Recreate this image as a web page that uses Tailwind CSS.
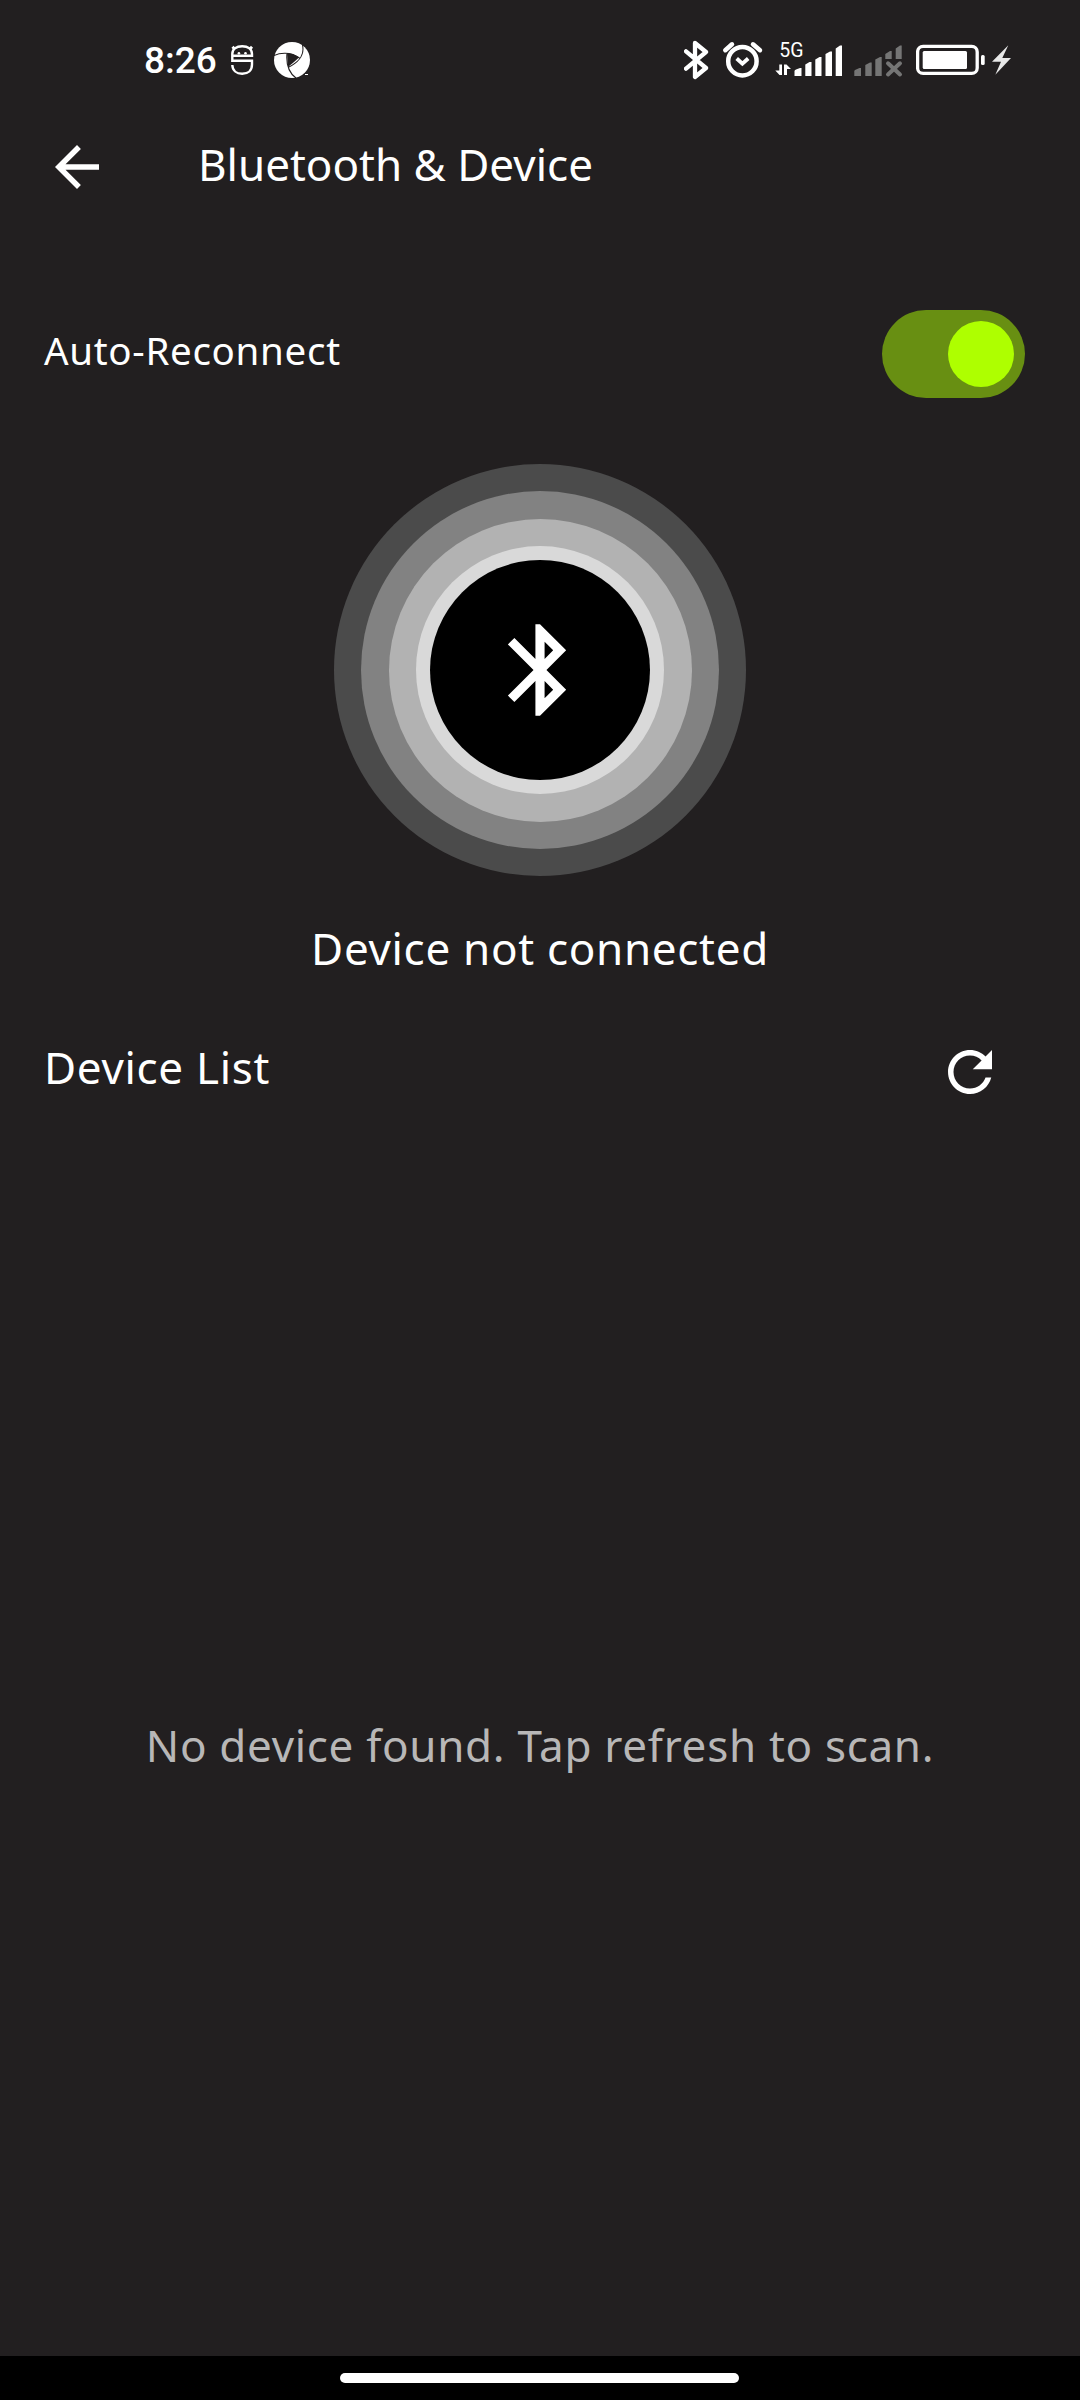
<!DOCTYPE html>
<html lang="en">
<head>
<meta charset="utf-8">
<title>Bluetooth &amp; Device</title>
<script src="https://cdn.jsdelivr.net/npm/@tailwindcss/browser@4"></script>
</head>
<body class="bg-[#221f20]">
<div class="flex h-[2400px] w-[1080px] flex-col overflow-hidden bg-[#221f20] font-['Noto_Sans',sans-serif] text-white">

  <!-- status bar -->
  <header class="flex h-[120px] items-start justify-between pt-9 pr-[68px] pl-[144px]">
    <div class="flex h-12 items-center">
      <span class="w-[86px] pt-0.5 font-['Roboto',sans-serif] text-[37px] leading-12 font-medium">8:26</span>
      <svg class="h-12 w-6" viewBox="230 36 24 48" fill="none" stroke="#fff" stroke-width="2.400">
        <path d="M252 55.700H232.300V54C232.300 49 236.500 46.300 242.200 46.300S252 49 252 54ZM232.300 55.700V60.800H252V64.500C252 70.500 248 73.800 242.200 73.800C236.500 73.800 232.500 70.500 232.300 65"/>
        <path d="M234.500 49L232.500 46.800M250 49L252 46.800" stroke-width="2.800"/>
        <circle cx="238.900" cy="53.300" r="1.300" fill="#fff" stroke="none"/><circle cx="245.500" cy="53.300" r="1.300" fill="#fff" stroke="none"/>
      </svg>
      <svg class="ml-5 h-12 w-[38px]" viewBox="274 36 38 48">
        <circle cx="292" cy="60" r="18" fill="#fff"/>
        <path d="M287 53L293 54L299 57.500L294 62L288 67Z" fill="#221f20"/>
        <path d="M274 55.500C279 53 290 51 299.500 58M302.500 45C304.500 54 301 61 288 67.500M296 78C289 73 286 64 287 53" fill="none" stroke="#221f20" stroke-width="1.100"/>
        <path d="M305 74.500h3" stroke="#fff"/>
      </svg>
    </div>
    <div class="flex h-12 items-center">
      <svg class="h-12 w-[38px]" viewBox="684 36 38 48" fill="none" stroke="#fff" stroke-width="4.300" stroke-linecap="round" stroke-linejoin="round">
        <path d="M686 51.300L706 68L695 77V43L706 52L686 68.700"/>
      </svg>
      <svg class="h-12 w-[53px]" viewBox="722 36 53 48" fill="none" stroke="#fff" stroke-width="4.500">
        <circle cx="742.400" cy="61.200" r="14.200"/>
        <path d="M736.700 58.500L742.400 63.700L748.200 58.500" stroke-width="3.800"/>
        <path d="M725.300 50.200L732 44.300M753 44.300L760 50.200" stroke-linecap="round"/>
      </svg>
      <svg class="h-12 w-[79px]" viewBox="775 36 79 48" fill="#fff">
        <text x="779.300" y="57" font-family="Roboto, sans-serif" font-size="19.500">5G</text>
        <path d="M779.300 64.500H782V75H779.500L775.300 70.500H779.300ZM784 75V64.500H786.500L791 69H787V75Z"/>
        <path d="M794.500 76V71Q794.500 70 796 69.500L800 68H801.500V76ZM805.300 76V64.500L809.500 62H811.500V76ZM815.300 76V59.500L819.500 57H821.500V76ZM825.500 76V54L830 51.500H832V76ZM835.700 76V48.500L840 45.500H842V76Z"/>
      </svg>
      <svg class="h-12 w-[62px]" viewBox="854 36 62 48" fill="#757575">
        <path d="M854.300 76V71Q854.300 70 856 69.500L859.500 68H861V76ZM865.300 76V65L870 62.500H871.700V76ZM875.300 76V59.500L880 57H881.700V76ZM885.300 59V54L890 51H891.700V59ZM895.700 59V48.500L900 45.500H901.700V59Z"/>
        <path d="M888 63.300L900 74.500M900 63.300L888 74.500" stroke="#757575" stroke-width="4" stroke-linecap="round"/>
      </svg>
      <svg class="h-12 w-24" viewBox="916 36 96 48" fill="#fff">
        <rect x="917.600" y="46.400" width="59.600" height="27" rx="5.500" fill="none" stroke="#fff" stroke-width="3.300"/>
        <rect x="922.700" y="51" width="44.300" height="18" rx="1.500"/>
        <rect x="981" y="55" width="3.700" height="10" rx="1.500"/>
        <path d="M1008.300 45.300L992 61.700H1001L995.300 74.700L1011 58H1002.300Z" fill="#e8e8e8"/>
      </svg>
    </div>
  </header>

  <!-- app bar -->
  <div class="flex h-[94px] items-center pl-11">
    <svg class="size-[66px]" viewBox="0 0 24 24" fill="#fff"><path d="M20 11H7.830l5.590-5.590L12 4l-8 8 8 8 1.410-1.410L7.830 13H20v-2z"/></svg>
    <h1 class="ml-[88px] pb-1.5 text-[44px] leading-[60px] whitespace-nowrap">Bluetooth &amp; Device</h1>
  </div>

  <!-- auto-reconnect -->
  <div class="mt-24 flex h-[88px] items-center justify-between pr-[55px] pl-11">
    <span class="pb-2 text-[38.5px] leading-[52px] tracking-[0.6875px] whitespace-nowrap">Auto-Reconnect</span>
    <div class="flex h-[88px] w-[143px] items-center justify-end rounded-full bg-[#688f12] pr-[11px]">
      <div class="size-[66px] rounded-full bg-[#aeff00]"></div>
    </div>
  </div>

  <!-- connection status -->
  <div class="mt-[66px] flex flex-col items-center">
    <div class="flex size-[412px] items-center justify-center rounded-full bg-[#4b4b4b]">
      <div class="flex size-[358px] items-center justify-center rounded-full bg-[#828282]">
        <div class="flex size-[303px] items-center justify-center rounded-full bg-[#b2b2b2]">
          <div class="flex size-[248px] items-center justify-center rounded-full bg-[#d9d9d9]">
            <div class="flex size-[220px] items-center justify-center rounded-full bg-black">
              <svg class="size-[110px]" viewBox="0 0 24 24" fill="#fff"><path d="M17.710 7.710L12 2h-1v7.590L6.410 5 5 6.410 10.590 12 5 17.590 6.410 19 11 14.410V22h1l5.710-5.710-4.300-4.290 4.300-4.290zM13 5.830l1.880 1.880L13 9.590V5.830zm1.880 10.460L13 18.170v-3.760l1.880 1.880z"/></svg>
            </div>
          </div>
        </div>
      </div>
    </div>
    <p class="mt-[42px] text-[44px] leading-[60px] tracking-[0.6875px] whitespace-nowrap">Device not connected</p>
  </div>

  <!-- device list -->
  <div class="mt-[61px] flex h-[66px] items-center justify-between pr-[77px] pl-11">
    <h2 class="pb-2.5 text-[44px] leading-[60px] tracking-[0.6875px] whitespace-nowrap">Device List</h2>
    <svg class="size-[66px]" viewBox="0 0 24 24" fill="#fff"><path d="M17.650 6.350C16.200 4.900 14.210 4 12 4c-4.420 0-7.990 3.580-7.990 8s3.570 8 7.990 8c3.730 0 6.840-2.550 7.730-6h-2.080c-.82 2.330-3.040 4-5.650 4-3.310 0-6-2.690-6-6s2.690-6 6-6c1.660 0 3.140.69 4.220 1.780L13 11h7V4l-2.350 2.350z"/></svg>
  </div>
  <div class="flex flex-1 items-center justify-center pt-7">
    <p class="text-[44px] leading-[60px] tracking-[0.6875px] whitespace-nowrap text-[#b8b7b7]">No device found. Tap refresh to scan.</p>
  </div>

  <!-- gesture bar -->
  <footer class="flex h-11 justify-center bg-black pt-[17px] pr-px">
    <div class="h-2.5 w-[399px] rounded-full bg-white"></div>
  </footer>
</div>
</body>
</html>
